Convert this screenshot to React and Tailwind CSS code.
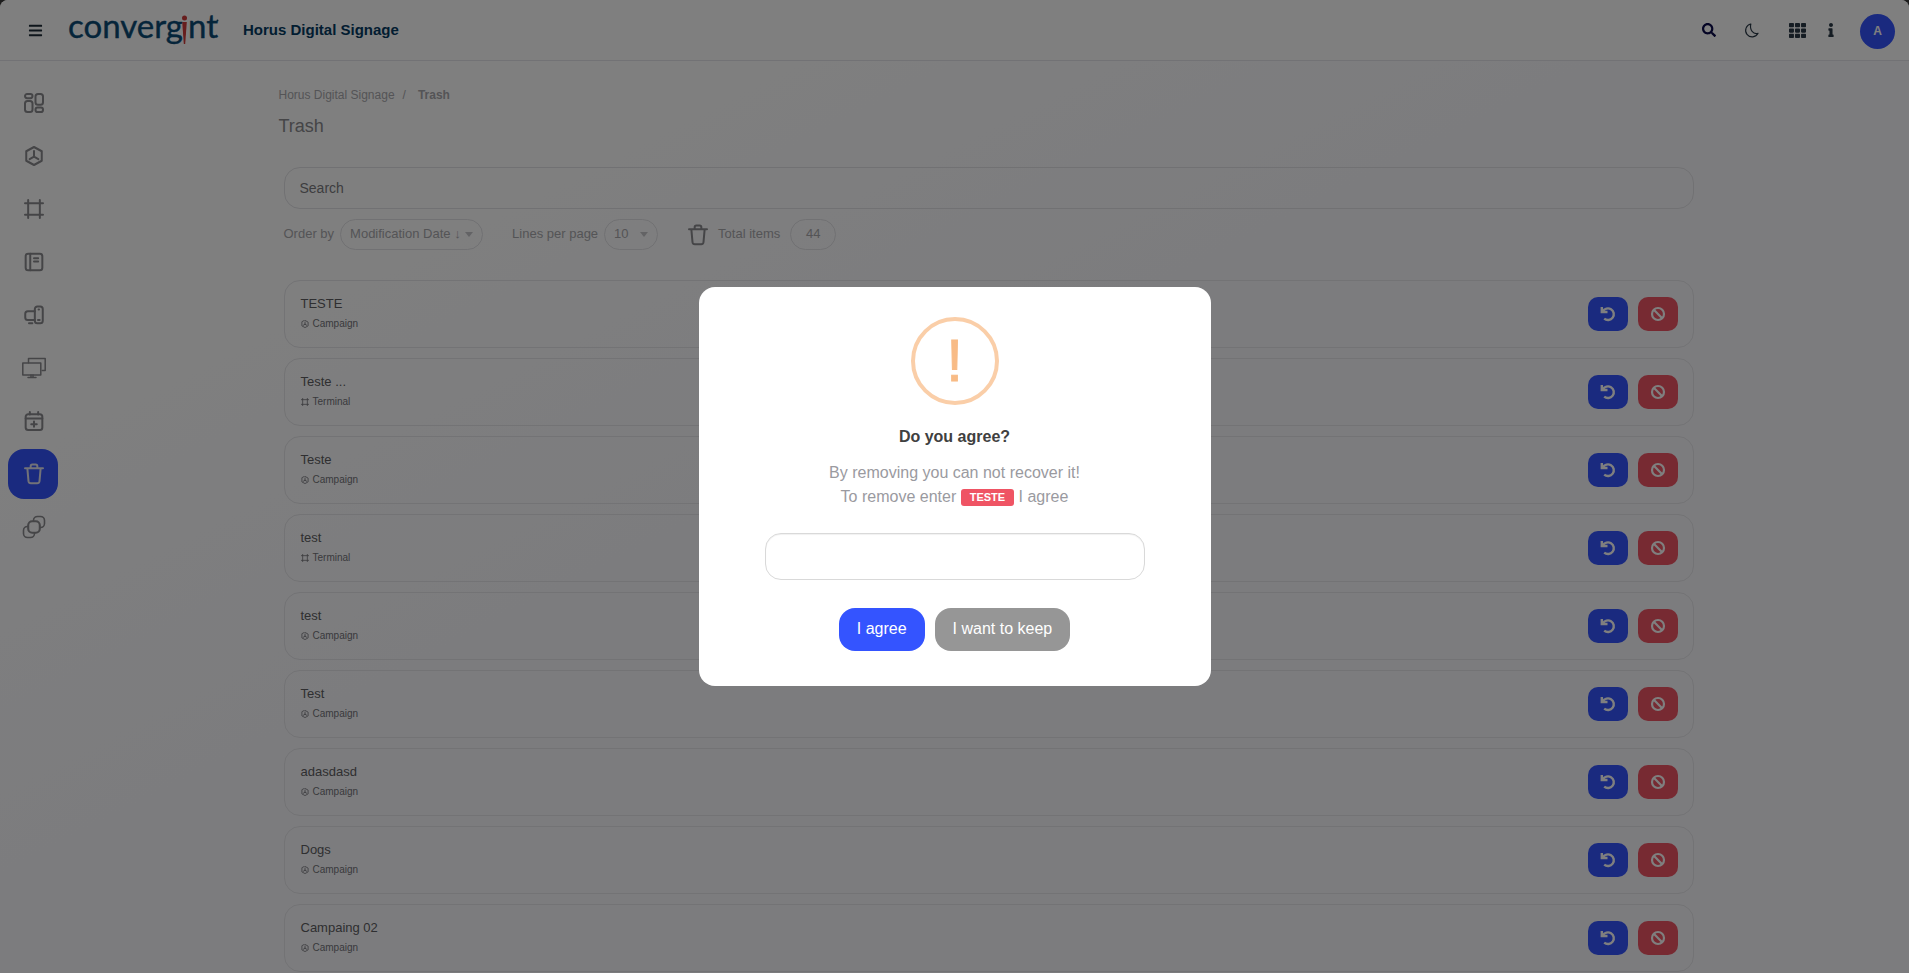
import React from "react";
import { FaBars, FaSearch, FaTh, FaInfo } from "react-icons/fa";

const stroke = { fill: "none", stroke: "currentColor", strokeLinecap: "round", strokeLinejoin: "round" };

function Icon({ className = "h-5 w-5", sw = 2.4, vb = "0 0 24 24", children }) {
  return (
    <svg viewBox={vb} className={className} {...stroke} strokeWidth={sw} aria-hidden="true">
      {children}
    </svg>
  );
}

const CubeShape = (
  <>
    <path d="M12 1.2 21.3 6.3v11.4L12 22.8 2.7 17.7V6.3z" />
    <path d="M12 6v6.8M12 12.8l-5.2 3M12 12.8l5.2 3" />
  </>
);
const FrameShape = <path d="M1.2 5h21.600M1.200 19h21.600M5 1.200v21.600M19 1.200v21.600" />;

function TrashIcon({ className }) {
  return (
    <Icon className={className} vb="0 0 24 26">
      <path d="M1.200 6h21.600M8 6V3.600C8 2.400 8.800 1.600 10 1.600h4c1.200 0 2 .8 2 2V6M4 6l1.400 15.600c.2 1.500 1.300 2.600 2.800 2.600h7.600c1.500 0 2.600-1.100 2.800-2.600L20 6" />
    </Icon>
  );
}

function RestoreIcon() {
  return (
    <svg viewBox="0 0 16 16" className="h-4 w-4" fill="none" stroke="currentColor" strokeWidth="2.4" aria-hidden="true">
      <path d="M1.800 1v5h5.700" />
      <path d="M2.800 5.600A5.800 5.800 0 1 1 4.200 12.600" />
    </svg>
  );
}

function ForbidIcon() {
  return (
    <svg viewBox="0 0 16 16" className="h-4 w-4" fill="none" stroke="currentColor" strokeWidth="2.2" aria-hidden="true">
      <circle cx="8" cy="8" r="6" />
      <path d="M3.800 3.800l8.400 8.400" />
    </svg>
  );
}

const navItems = [
  {
    label: "Dashboard",
    icon: (
      <Icon>
        <rect x="1.200" y="1.200" width="9" height="5" rx="2.500" />
        <rect x="1.200" y="9.500" width="9" height="13.300" rx="3" />
        <rect x="13.800" y="1.200" width="9" height="13" rx="3" />
        <rect x="13.800" y="17.500" width="9" height="5.300" rx="2.500" />
      </Icon>
    ),
  },
  { label: "Campaigns", icon: <Icon>{CubeShape}</Icon> },
  { label: "Terminals", icon: <Icon>{FrameShape}</Icon> },
  {
    label: "Playlists",
    icon: (
      <Icon>
        <rect x="2" y="2" width="20" height="20" rx="3" />
        <path d="M7.500 2v20M12 7.500h5M12 11.500h5" />
      </Icon>
    ),
  },
  {
    label: "Devices",
    icon: (
      <Icon>
        <path d="M13 7.500H4.500a3 3 0 0 0-3 3v4.500a3 3 0 0 0 3 3H13M6 21.800h4" />
        <rect x="13" y="1.800" width="9.500" height="20" rx="3" />
        <path d="M17.500 5.500h.5M16.800 18h2" />
      </Icon>
    ),
  },
  {
    label: "Screens",
    icon: (
      <Icon className="h-6 w-6" sw={1.5}>
        <rect x="0.800" y="7" width="18" height="12" />
        <path d="M6.500 6.800V2.500h16.700v12h-3M9 19v2.400M11 19v2.400M6 21.600h8" />
      </Icon>
    ),
  },
  {
    label: "Schedule",
    icon: (
      <Icon>
        <rect x="2" y="4" width="20" height="18.700" rx="3" />
        <path d="M2 9h20M7 1.200v3M17 1.200v3M12 12.500v6.500M8.700 15.800h6.600" />
      </Icon>
    ),
  },
  { label: "Trash", active: true, icon: <TrashIcon className="h-6 w-5" /> },
  {
    label: "Groups",
    icon: (
      <Icon className="h-6 w-6" sw={1.6}>
        <path d="M11.500 6V5.500a4 4 0 0 1 4-4h3a4 4 0 0 1 4 4v3a4 4 0 0 1-4 4H18M6 11.500h-.5a4 4 0 0 0-4 4v3a4 4 0 0 0 4 4h3a4 4 0 0 0 4-4V18" />
        <rect x="6.200" y="6.200" width="11.600" height="11.600" rx="4" strokeWidth="2.100" />
      </Icon>
    ),
  },
];

const items = [
  ["TESTE", "Campaign"],
  ["Teste ...", "Terminal"],
  ["Teste", "Campaign"],
  ["test", "Terminal"],
  ["test", "Campaign"],
  ["Test", "Campaign"],
  ["adasdasd", "Campaign"],
  ["Dogs", "Campaign"],
  ["Campaing 02", "Campaign"],
];

function Logo() {
  return (
    <svg viewBox="0 0 154 48" className="h-12 w-[154px] shrink-0" role="img" aria-label="convergint">
      <g fill="#0b4a75" stroke="#0b4a75" strokeWidth="0.4" fontFamily="Lato, sans-serif" fontSize="33">
        <text x="1" y="32">converg</text>
        <text x="121" y="32">nt</text>
      </g>
      <circle cx="117.500" cy="12" r="2.500" fill="#cf3a3a" />
      <path d="M115.200 16h4.600l-1.600 22h-1.400z" fill="#cf3a3a" />
      <circle cx="150.500" cy="14.500" r="1" fill="#0b4a75" />
    </svg>
  );
}

function Header() {
  return (
    <header className="flex h-[61px] items-center border-b border-[#e4e4ea] bg-white pr-3.5 pl-7">
      <button type="button" aria-label="Menu" className="text-[#1c2b36]">
        <FaBars className="h-[15px] w-[15px]" />
      </button>
      <a href="#home" className="ml-6">
        <Logo />
      </a>
      <h1 className="ml-[22px] text-[15px] font-bold text-[#053a63]">Horus Digital Signage</h1>
      <div className="ml-auto flex items-center text-[#2a3947]">
        <button type="button" aria-label="Search" className="text-[#0a0a4a]">
          <FaSearch className="h-3.5 w-3.5" />
        </button>
        <button type="button" aria-label="Dark mode" className="ml-7">
          <Icon className="h-[15px] w-[15px]" sw={1.8}>
            <path d="M11 1.500A10.500 10.500 0 1 0 22.500 16.500C15 19 8.500 11 11 1.500z" />
          </Icon>
        </button>
        <button type="button" aria-label="Apps" className="ml-[30px]">
          <FaTh className="h-[17px] w-[17px]" />
        </button>
        <button type="button" aria-label="Information" className="ml-[18px]">
          <FaInfo className="h-3.5 w-3.5" />
        </button>
        <button type="button" aria-label="Account" className="mt-0.5 ml-[22px] h-[35px] w-[35px] rounded-full bg-[#3454ff] text-xs font-bold text-white">
          A
        </button>
      </div>
    </header>
  );
}

function ItemRow({ name, type }) {
  return (
    <li className="flex h-[68px] items-center rounded-2xl border border-[#e6e6ea] px-[15px]">
      <div className="pl-px">
        <p className="text-[13px] leading-5 text-[#5e5e62]">{name}</p>
        <p className="flex items-center gap-1 text-[10px] leading-5 text-[#74747a]">
          <Icon className="h-2 w-2">{type === "Campaign" ? CubeShape : FrameShape}</Icon>
          {type}
        </p>
      </div>
      <div className="ml-auto flex gap-2.5 text-white">
        <button type="button" aria-label={"Restore " + name} className="flex h-[34px] w-10 items-center justify-center rounded-[10px] bg-[#3454ff]">
          <RestoreIcon />
        </button>
        <button type="button" aria-label={"Delete " + name} className="flex h-[34px] w-10 items-center justify-center rounded-[10px] bg-[#ef5464]">
          <ForbidIcon />
        </button>
      </div>
    </li>
  );
}

function PillSelect({ id, children, className }) {
  return (
    <span className="relative flex items-center">
      <select id={id} className={"h-[31px] appearance-none rounded-2xl border border-[#e2e2e6] bg-transparent pb-0.5 pl-[9px] text-[13px] " + className}>
        {children}
      </select>
      <svg viewBox="0 0 8 5" className="pointer-events-none absolute right-2.5 h-[5px] w-2" fill="#c6c6ca" aria-hidden="true">
        <path d="M0 0h8L4 5z" />
      </svg>
    </span>
  );
}

function Dialog() {
  return (
    <div className="fixed inset-0 flex items-center justify-center bg-black/50">
      <div role="dialog" aria-modal="true" aria-labelledby="dialog-title" className="flex w-[512px] flex-col items-center rounded-2xl bg-white px-[66px] pt-[30px] pb-[35px]">
        <div className="flex h-[88px] w-[88px] items-center justify-center rounded-full border-4 border-[#facea8] text-[60px] leading-none text-[#f8bb86] [-webkit-text-stroke:1px_#f8bb86]">!</div>
        <h2 id="dialog-title" className="mt-5 text-base font-bold text-[#404040]">Do you agree?</h2>
        <label htmlFor="confirm" className="mt-3 text-center text-base leading-6 text-[#9a9a9f]">
          By removing you can not recover it!
          <br />
          To remove enter{" "}
          <span className="inline-block rounded-[3px] bg-[#ef5464] px-[9px] align-[1px] text-[11px] leading-[17px] font-bold text-white">TESTE</span> I agree
        </label>
        <input id="confirm" type="text" className="mt-6 h-[47px] w-full rounded-2xl border border-[#d9d9d9] px-4 shadow-[inset_0_1px_1px_rgba(0,0,0,0.06)] outline-none" />
        <div className="mt-7 flex gap-2.5 text-base text-white">
          <button type="button" className="h-[43px] rounded-2xl bg-[#3454ff] px-[18px] pb-0.5">I agree</button>
          <button type="button" className="h-[43px] rounded-2xl bg-[#969696] px-[18px] pb-0.5">I want to keep</button>
        </div>
      </div>
    </div>
  );
}

export default function App() {
  return (
    <div className="h-screen overflow-hidden bg-[#3a3a3a] font-['Liberation_Sans',Arial,sans-serif]">
      <div className="flex h-full flex-col overflow-hidden rounded-t-lg bg-linear-to-br from-white from-20% to-[#f9f9fd] to-45%">
        <Header />
        <div className="flex min-h-0 flex-1">
          <nav aria-label="Main" className="flex w-[68px] shrink-0 flex-col gap-[3px] pt-[17px] pl-2">
            {navItems.map((n) => (
              <a
                key={n.label}
                href={"#" + n.label.toLowerCase()}
                aria-label={n.label}
                className={
                  "flex h-[50px] w-[50px] shrink-0 items-center justify-center rounded-2xl pl-0.5 " +
                  (n.active ? "bg-[#3454ff] text-[#e4e4f0]" : "text-[#8a8a8e]")
                }
              >
                {n.icon}
              </a>
            ))}
          </nav>
          <main className="mx-auto w-full max-w-[1420px] pt-6 text-[#a9a9ad]">
            <nav aria-label="Breadcrumb" className="flex text-xs leading-5">
              <a href="#home">Horus Digital Signage</a>
              <span className="mx-2">/</span>
              <span className="ml-1 font-bold">Trash</span>
            </nav>
            <h2 className="mt-[9px] text-lg leading-6 text-[#8a8a8e]">Trash</h2>
            <div className="px-[5px]">
              <input
                type="search"
                aria-label="Search"
                placeholder="Search"
                className="mt-[29px] h-[42px] w-full rounded-2xl border border-[#e2e2e6] bg-transparent px-[15px] text-sm placeholder:text-[#7b7b80]"
              />
              <div className="mt-2.5 flex items-center text-[13px]">
                <label htmlFor="order" className="mr-1.5 pb-0.5">Order by</label>
                <PillSelect id="order" className="w-[143px]">
                  <option>Modification Date ↓</option>
                </PillSelect>
                <label htmlFor="lines" className="mr-1.5 ml-[29px] pb-0.5">Lines per page</label>
                <PillSelect id="lines" className="w-[54px]">
                  <option>10</option>
                </PillSelect>
                <TrashIcon className="mr-2.5 ml-[30px] h-[22px] w-5 text-[#8a8a8e]" />
                <span className="pb-0.5">Total items</span>
                <span className="ml-2.5 flex h-[31px] w-[46px] items-center justify-center rounded-2xl border border-[#e2e2e6] pb-0.5">44</span>
              </div>
              <ul className="mt-[30px] flex flex-col gap-2.5">
                {items.map(([name, type], i) => (
                  <ItemRow key={i} name={name} type={type} />
                ))}
              </ul>
            </div>
          </main>
        </div>
      </div>
      <Dialog />
    </div>
  );
}
